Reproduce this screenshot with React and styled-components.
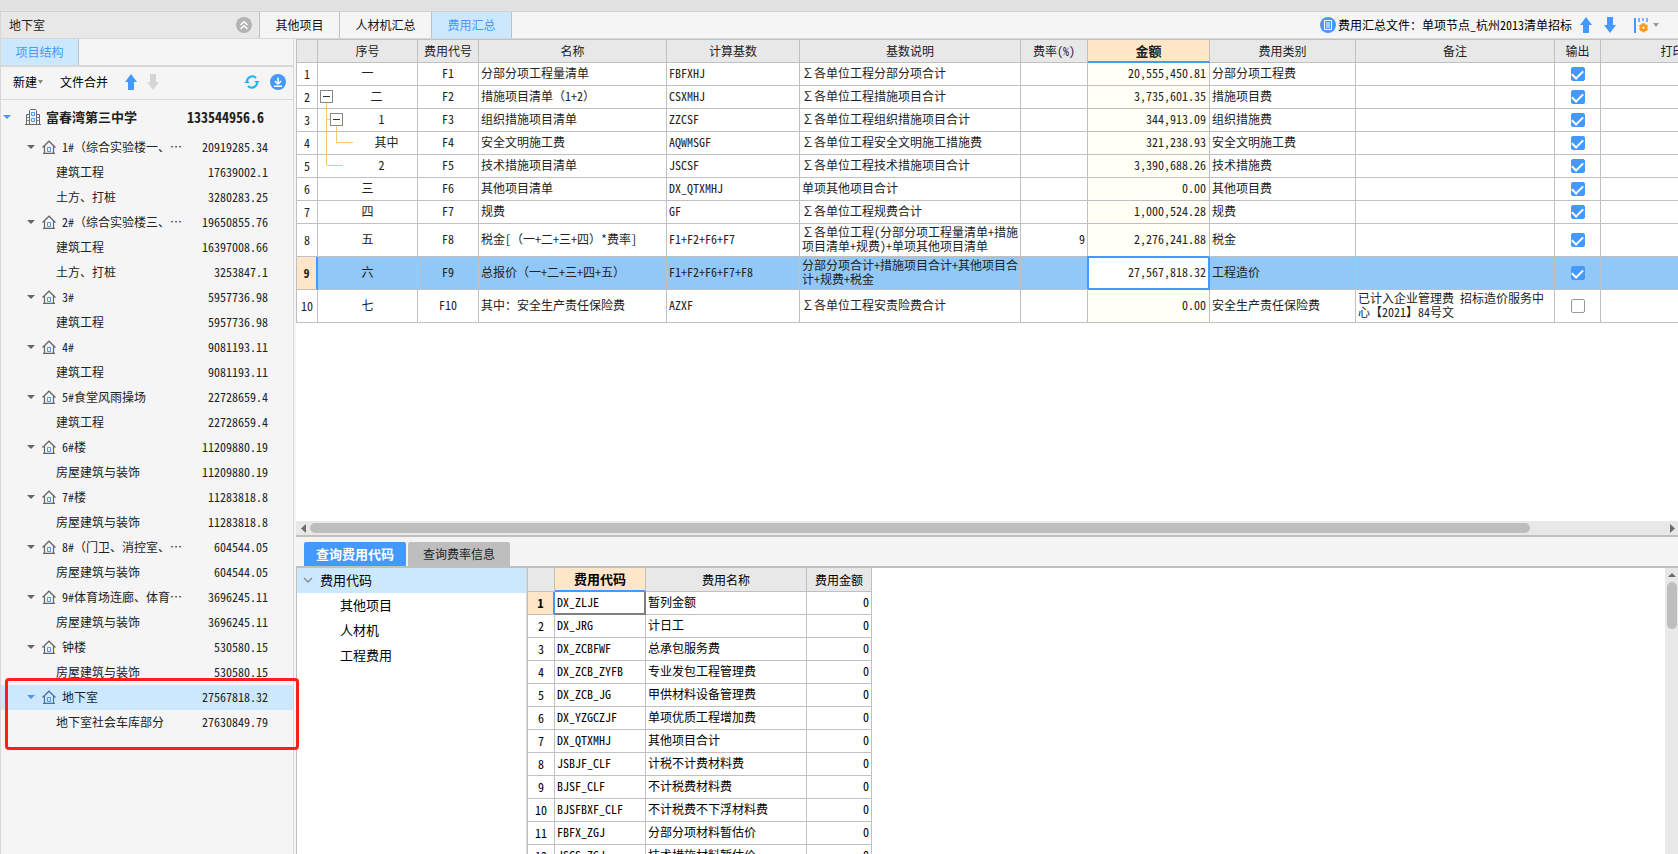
import React, { useState } from "react";
import styled, { createGlobalStyle, css } from "styled-components";

const BLUE = "#4499ff";
const LINE = "#c0c0c0";
const SOFT_LINE = "#d8d8d8";

const TABS = [
  { name: "其他项目", width: 80 },
  { name: "人材机汇总", width: 92 },
  { name: "费用汇总", width: 80 },
];

const PROJECT = { name: "富春湾第三中学", amount: "133544956.6" };

const BUILDINGS = [
  {
    name: "1#（综合实验楼一、…",
    amount: "20919285.34",
    units: [
      ["建筑工程", "17639002.1"],
      ["土方、打桩", "3280283.25"],
    ],
  },
  {
    name: "2#（综合实验楼三、…",
    amount: "19650855.76",
    units: [
      ["建筑工程", "16397008.66"],
      ["土方、打桩", "3253847.1"],
    ],
  },
  { name: "3#", amount: "5957736.98", units: [["建筑工程", "5957736.98"]] },
  { name: "4#", amount: "9081193.11", units: [["建筑工程", "9081193.11"]] },
  { name: "5#食堂风雨操场", amount: "22728659.4", units: [["建筑工程", "22728659.4"]] },
  { name: "6#楼", amount: "11209880.19", units: [["房屋建筑与装饰", "11209880.19"]] },
  { name: "7#楼", amount: "11283818.8", units: [["房屋建筑与装饰", "11283818.8"]] },
  { name: "8#（门卫、消控室、…", amount: "604544.05", units: [["房屋建筑与装饰", "604544.05"]] },
  { name: "9#体育场连廊、体育…", amount: "3696245.11", units: [["房屋建筑与装饰", "3696245.11"]] },
  { name: "钟楼", amount: "530580.15", units: [["房屋建筑与装饰", "530580.15"]] },
  {
    name: "地下室",
    amount: "27567818.32",
    units: [["地下室社会车库部分", "27630849.79"]],
    active: true,
  },
];

const FEE_COLUMNS = [
  { name: "", width: 22 },
  { name: "序号", width: 100 },
  { name: "费用代号", width: 61 },
  { name: "名称", width: 188 },
  { name: "计算基数", width: 133 },
  { name: "基数说明", width: 221 },
  { name: "费率(%)", width: 67 },
  { name: "金额", width: 122, current: true },
  { name: "费用类别", width: 146 },
  { name: "备注", width: 199 },
  { name: "输出", width: 46 },
  { name: "打印", width: 144 },
];

const FEES = [
  { no: "一", code: "F1", name: "分部分项工程量清单", base: "FBFXHJ", desc: "∑各单位工程分部分项合计", amount: "20,555,450.81", type: "分部分项工程费", out: true },
  { no: "二", code: "F2", name: "措施项目清单（1+2）", base: "CSXMHJ", desc: "∑各单位工程措施项目合计", amount: "3,735,601.35", type: "措施项目费", out: true, indent: 18, branch: "M8.5 17V23", box: 2 },
  { no: "1", code: "F3", name: "组织措施项目清单", base: "ZZCSF", desc: "∑各单位工程组织措施项目合计", amount: "344,913.09", type: "组织措施费", out: true, indent: 28, branch: "M8.5 0V23M8.5 10.5H12M18.5 17V23", box: 12 },
  { no: "其中", code: "F4", name: "安全文明施工费", base: "AQWMSGF", desc: "∑各单位工程安全文明施工措施费", amount: "321,238.93", type: "安全文明施工费", out: true, indent: 38, branch: "M8.5 0V23M18.5 0V10.5H35" },
  { no: "2", code: "F5", name: "技术措施项目清单", base: "JSCSF", desc: "∑各单位工程技术措施项目合计", amount: "3,390,688.26", type: "技术措施费", out: true, indent: 28, branch: "M8.5 0V10.5H25" },
  { no: "三", code: "F6", name: "其他项目清单", base: "DX_QTXMHJ", desc: "单项其他项目合计", amount: "0.00", type: "其他项目费", out: true },
  { no: "四", code: "F7", name: "规费", base: "GF", desc: "∑各单位工程规费合计", amount: "1,000,524.28", type: "规费", out: true },
  { no: "五", code: "F8", name: "税金[（一+二+三+四）*费率]", base: "F1+F2+F6+F7", desc: "∑各单位工程(分部分项工程量清单+措施项目清单+规费)+单项其他项目清单", rate: "9", amount: "2,276,241.88", type: "税金", out: true, tall: true },
  { no: "六", code: "F9", name: "总报价（一+二+三+四+五）", base: "F1+F2+F6+F7+F8", desc: "分部分项合计+措施项目合计+其他项目合计+规费+税金", amount: "27,567,818.32", type: "工程造价", out: true, tall: true, current: true },
  { no: "七", code: "F10", name: "其中：安全生产责任保险费", base: "AZXF", desc: "∑各单位工程安责险费合计", amount: "0.00", type: "安全生产责任保险费", note: "已计入企业管理费 招标造价服务中心【2021】84号文", out: false, tall: true },
];

const CODE_COLUMNS = [
  { name: "", width: 28 },
  { name: "费用代码", width: 91, current: true },
  { name: "费用名称", width: 161 },
  { name: "费用金额", width: 65 },
];

const CODES = [
  ["DX_ZLJE", "暂列金额"],
  ["DX_JRG", "计日工"],
  ["DX_ZCBFWF", "总承包服务费"],
  ["DX_ZCB_ZYFB", "专业发包工程管理费"],
  ["DX_ZCB_JG", "甲供材料设备管理费"],
  ["DX_YZGCZJF", "单项优质工程增加费"],
  ["DX_QTXMHJ", "其他项目合计"],
  ["JSBJF_CLF", "计税不计费材料费"],
  ["BJSF_CLF", "不计税费材料费"],
  ["BJSFBXF_CLF", "不计税费不下浮材料费"],
  ["FBFX_ZGJ", "分部分项材料暂估价"],
  ["JSCS_ZGJ", "技术措施材料暂估价"],
];

const sumWidth = (columns) => columns.reduce((sum, c) => sum + c.width, 0);

// 全角括号保持一个汉字宽
const renderName = (text) =>
  text
    .split(/([（）])/)
    .map((part, i) => (/[（）]/.test(part) ? <Wide key={i}>{part}</Wide> : part));

// 图标
const ArrowIcon = ({ down, color = BLUE }) => (
  <svg width="12" height="16" viewBox="0 0 12 16" aria-hidden="true">
    <path
      fill={color}
      d={down ? "M3 0h6v8h3L6 16 0 8h3z" : "M3 16h6V8h3L6 0 0 8h3z"}
    />
  </svg>
);

const Caret = ({ color = "#666", width = 8 }) => (
  <svg width={width} height="4" viewBox="0 0 8 4" preserveAspectRatio="none" aria-hidden="true">
    <path fill={color} d="M0 0h8L4 4z" />
  </svg>
);

const HouseIcon = ({ color }) => (
  <svg width="14" height="14" viewBox="0 0 14 14" fill="none" aria-hidden="true">
    <path d="M0.5 7.5L7 1.2l6.5 6.3M2.5 6v7M11.5 6v7M1 13.3h12" stroke={color} strokeWidth="1.2" />
    <path d="M5.5 7.5h3v4h-3z" stroke={BLUE} />
  </svg>
);

const SchoolIcon = () => (
  <svg width="16" height="16" viewBox="0 0 16 16" fill="none" aria-hidden="true">
    <path d="M0 15.5h16M4.5 15V1.5l1-1h5l1 1V15M1.5 15V5.5h3M14.5 15V5.5h-3" stroke="#666" />
    <path d="M2 8.5h2M2 11.5h2M12 8.5h2M12 11.5h2" stroke="#888" />
    <path d="M6.5 3.5h3v3h-3zM6.5 9.5h3v3h-3z" stroke={BLUE} />
  </svg>
);

const CollapseIcon = () => (
  <svg width="16" height="16" viewBox="0 0 16 16" fill="none" aria-hidden="true">
    <circle cx="8" cy="8" r="8" fill="#b3b3b3" />
    <path d="M4.5 8L8 4.7 11.5 8M4.5 12L8 8.7l3.5 3.3" stroke="#fff" strokeWidth="1.5" />
  </svg>
);

const RefreshIcon = () => (
  <svg width="16" height="14" viewBox="0 0 16 14" fill="none" aria-hidden="true">
    <path d="M3 6.5A5.2 5.2 0 0 1 12 3M13 7.5A5.2 5.2 0 0 1 4 11" stroke="#1ab2f5" strokeWidth="2" />
    <path d="M10.2 6h5.6L13 9zM0.2 8h5.6L3 5z" fill="#1ab2f5" />
  </svg>
);

const DownloadIcon = () => (
  <svg width="16" height="16" viewBox="0 0 16 16" fill="none" aria-hidden="true">
    <circle cx="8" cy="8" r="8" fill={BLUE} />
    <path d="M8 3.5v6M4.8 7L8 10l3.2-3M4 12.2h8" stroke="#fff" strokeWidth="1.5" />
  </svg>
);

const FileIcon = () => (
  <svg width="16" height="16" viewBox="0 0 16 16" fill="none" aria-hidden="true">
    <circle cx="8" cy="8" r="8" fill={BLUE} />
    <path d="M4.5 3.5h7v9h-7zM6 6h4M6 8h4M6 10h4" stroke="#fff" />
  </svg>
);

const ColumnSettingIcon = () => (
  <svg width="14" height="15" viewBox="0 0 14 15" fill="none" aria-hidden="true">
    <path d="M1 0v15" stroke={BLUE} strokeWidth="2" />
    <path d="M5 0v4M9 0v3M13 0v4" stroke={BLUE} strokeWidth="1.4" />
    <path
      d="M9.5 5.2v9M5.6 7.4l7.8 4.6M5.6 12l7.8-4.6"
      stroke="#ff9a1f"
      strokeWidth="2.8"
    />
    <circle cx="9.5" cy="9.7" r="2.4" stroke="#ff9a1f" strokeWidth="2.6" fill="#fff" />
  </svg>
);

const FeeCell = ({ fee }) => (
  <NumberCell $indent={fee.indent}>
    {fee.branch && (
      <Branch width="40" height="23" viewBox="0 0 40 23" aria-hidden="true">
        <path d={fee.branch} />
      </Branch>
    )}
    {fee.box && (
      <FoldButton $left={fee.box} aria-label={`折叠 ${fee.name}`}>
        <svg width="7" height="1" aria-hidden="true">
          <path d="M0 0h7v1H0z" fill="#333" />
        </svg>
      </FoldButton>
    )}
    {fee.no}
  </NumberCell>
);

const App = () => {
  const [fees, setFees] = useState(FEES);

  const toggleOut = (code) => {
    setFees(fees.map((f) => (f.code === code ? { ...f, out: !f.out } : f)));
  };

  return (
    <>
      <GlobalStyle />
      <Page>
        <WindowEdge />
        <TopBar>
          <CurrentNode>
            地下室
            <IconButton aria-label="收起">
              <CollapseIcon />
            </IconButton>
          </CurrentNode>
          {TABS.map((tab) => (
            <Tab key={tab.name} $width={tab.width} $active={tab.name === "费用汇总"}>
              {tab.name}
            </Tab>
          ))}
          <FileBar>
            <FileName>
              <FileIcon />
              费用汇总文件：单项节点_杭州2013清单招标
            </FileName>
            <IconButton aria-label="上移">
              <ArrowIcon />
            </IconButton>
            <IconButton aria-label="下移">
              <ArrowIcon down />
            </IconButton>
            <IconButton aria-label="列设置">
              <ColumnSettingIcon />
              <Caret color="#999" width={6} />
            </IconButton>
          </FileBar>
        </TopBar>

        <Body>
          <Sidebar>
            <SideTabs>
              <SideTab>项目结构</SideTab>
            </SideTabs>
            <Toolbar>
              <TextButton>
                新建
                <Caret color="#888" width={5} />
              </TextButton>
              <TextButton>文件合并</TextButton>
              <ArrowGroup>
                <IconButton aria-label="上移节点">
                  <ArrowIcon />
                </IconButton>
                <IconButton aria-label="下移节点" disabled>
                  <ArrowIcon down color="#d5d5d5" />
                </IconButton>
              </ArrowGroup>
              <SyncGroup>
                <IconButton aria-label="刷新">
                  <RefreshIcon />
                </IconButton>
                <IconButton aria-label="下载">
                  <DownloadIcon />
                </IconButton>
              </SyncGroup>
            </Toolbar>

            <RootRow>
              <Caret color={BLUE} />
              <RootLabel>
                <SchoolIcon />
                {PROJECT.name}
              </RootLabel>
              <RootAmount>{PROJECT.amount}</RootAmount>
            </RootRow>
            {BUILDINGS.map((b) => (
              <Building key={b.name}>
                <BuildingRow $active={b.active}>
                  <Caret color={b.active ? BLUE : "#666"} />
                  <BuildingLabel>
                    <HouseIcon color={b.active ? "#4d6f99" : "#666"} />
                    <span>{renderName(b.name)}</span>
                  </BuildingLabel>
                  <span>{b.amount}</span>
                </BuildingRow>
                {b.units.map(([name, amount]) => (
                  <UnitRow key={name}>
                    <span>{name}</span>
                    <span>{amount}</span>
                  </UnitRow>
                ))}
                {b.active && <Marker />}
              </Building>
            ))}
          </Sidebar>

          <Main>
            <FeePane>
              <Table $width={sumWidth(FEE_COLUMNS)}>
                <colgroup>
                  {FEE_COLUMNS.map((c, i) => (
                    <Col key={i} $width={c.width} />
                  ))}
                </colgroup>
                <thead>
                  <tr>
                    {FEE_COLUMNS.map((c, i) => (
                      <HeadCell key={i} $current={c.current} $top>
                        {c.name}
                      </HeadCell>
                    ))}
                  </tr>
                </thead>
                <tbody>
                  {fees.map((fee, i) => (
                    <FeeRow key={fee.code} $tall={fee.tall} $current={fee.current}>
                      <IndexCell $current={fee.current}>{i + 1}</IndexCell>
                      <FeeCell fee={fee} />
                      <Cell $align="center">{fee.code}</Cell>
                      <Cell>{renderName(fee.name)}</Cell>
                      <Cell>{fee.base}</Cell>
                      <Cell>{fee.desc}</Cell>
                      <Cell $align="right">{fee.rate}</Cell>
                      <AmountCell $current={fee.current}>{fee.amount}</AmountCell>
                      <Cell>{fee.type}</Cell>
                      <Cell>{fee.note}</Cell>
                      <CheckCell>
                        <Checkbox
                          type="checkbox"
                          aria-label={`输出 ${fee.name}`}
                          checked={fee.out}
                          onChange={() => toggleOut(fee.code)}
                        />
                      </CheckCell>
                      <Cell />
                    </FeeRow>
                  ))}
                </tbody>
              </Table>
            </FeePane>
            <HScroll>
              <svg width="5" height="9" viewBox="0 0 5 9" aria-hidden="true">
                <path d="M5 0v9L0 4.5z" fill="#6b6b73" />
              </svg>
              <HTrack>
                <HThumb />
              </HTrack>
              <svg width="5" height="9" viewBox="0 0 5 9" aria-hidden="true">
                <path d="M0 0v9l5-4.5z" fill="#6b6b73" />
              </svg>
            </HScroll>

            <QueryTabs>
              <QueryTab $active>查询费用代码</QueryTab>
              <QueryTab>查询费率信息</QueryTab>
            </QueryTabs>
            <QueryPane>
              <CodeTree>
                <CodeTreeRoot>
                  <svg width="10" height="6" viewBox="0 0 10 6" fill="none" aria-hidden="true">
                    <path d="M1 1l4 4 4-4" stroke="#888" strokeWidth="1.4" />
                  </svg>
                  费用代码
                </CodeTreeRoot>
                <CodeTreeItem>其他项目</CodeTreeItem>
                <CodeTreeItem>人材机</CodeTreeItem>
                <CodeTreeItem>工程费用</CodeTreeItem>
              </CodeTree>
              <CodeTableBox>
                <Table $width={sumWidth(CODE_COLUMNS)}>
                  <colgroup>
                    {CODE_COLUMNS.map((c, i) => (
                      <Col key={i} $width={c.width} />
                    ))}
                  </colgroup>
                  <thead>
                    <tr>
                      {CODE_COLUMNS.map((c, i) => (
                        <HeadCell key={i} $current={c.current}>
                          {c.name}
                        </HeadCell>
                      ))}
                    </tr>
                  </thead>
                  <tbody>
                    {CODES.map(([code, name], i) => (
                      <FeeRow key={code}>
                        <IndexCell $current={i === 0}>{i + 1}</IndexCell>
                        <CodeCell $current={i === 0}>{code}</CodeCell>
                        <Cell>{name}</Cell>
                        <Cell $align="right">0</Cell>
                      </FeeRow>
                    ))}
                  </tbody>
                </Table>
              </CodeTableBox>
              <VScroll>
                <svg width="8" height="4" viewBox="0 0 8 4" aria-hidden="true">
                  <path d="M4 0l4 4H0z" fill="#6b6b73" />
                </svg>
                <VThumb />
              </VScroll>
            </QueryPane>
          </Main>
        </Body>
      </Page>
    </>
  );
};

export default App;

const GlobalStyle = createGlobalStyle`
  * {
    box-sizing: border-box;
  }
  body {
    margin: 0;
    overflow: hidden;
    background: #f5f5f5;
  }
  body, button, input {
    font-family: "Noto Sans CJK SC", sans-serif;
    font-size: 12px;
    line-height: 14px;
    color: #222;
    /* 西文和数字占半个汉字宽 */
    font-feature-settings: "hwid";
    text-spacing-trim: space-all;
  }
  button {
    border: 0;
    padding: 0;
    background: none;
    white-space: nowrap;
  }
  svg {
    display: block;
    flex: none;
  }
`;

const Wide = styled.span`
  font-feature-settings: normal;
`;

const Page = styled.div`
  display: flex;
  flex-direction: column;
  height: 100vh;
`;

const WindowEdge = styled.div`
  flex: none;
  height: 12px;
  background: #e2e2e2;
  border-bottom: 1px solid #cfcfcf;
`;

const TopBar = styled.header`
  display: flex;
  flex: none;
  height: 27px;
  border-bottom: 1px solid ${SOFT_LINE};
`;

const CurrentNode = styled.div`
  display: flex;
  align-items: center;
  justify-content: space-between;
  width: 260px;
  padding: 0 7px 0 8px;
  background: #e8e8e8;
  border-left: 1px solid ${SOFT_LINE};
  border-right: 1px solid ${LINE};
`;

const IconButton = styled.button`
  display: flex;
  align-items: center;
  gap: 5px;
`;

const Tab = styled.button`
  width: ${(p) => p.$width}px;
  border-right: 1px solid ${LINE};
  color: ${(p) => (p.$active ? BLUE : "#111")};
  background: ${(p) => (p.$active ? "#cce8ff" : "#f5f5f5")};
`;

const FileBar = styled.div`
  display: flex;
  align-items: center;
  gap: 12px;
  margin-left: auto;
  padding-right: 19px;

  button:last-child {
    margin-left: 6px;
  }
`;

const FileName = styled.div`
  display: flex;
  align-items: center;
  gap: 2px;
  margin-right: -4px;
  white-space: nowrap;
  color: #000;
`;

const Body = styled.div`
  display: flex;
  flex: 1;
  min-height: 0;
`;

const Sidebar = styled.aside`
  flex: none;
  width: 294px;
  margin-right: 2px;
  border-left: 1px solid ${SOFT_LINE};
  border-right: 1px solid ${SOFT_LINE};
`;

const SideTabs = styled.div`
  display: flex;
  height: 28px;
  border-bottom: 2px solid ${SOFT_LINE};
`;

const SideTab = styled.button`
  width: 78px;
  color: ${BLUE};
  background: #cce8ff;
  border-right: 1px solid ${LINE};
`;

const Toolbar = styled.div`
  display: flex;
  align-items: center;
  height: 33px;
  gap: 17px;
  padding: 0 7px 2px 12px;
  border-bottom: 1px solid ${SOFT_LINE};
`;

const TextButton = styled.button`
  display: flex;
  align-items: center;
  gap: 1px;
  color: #000;
`;

const ArrowGroup = styled.div`
  display: flex;
  gap: 10px;
`;

const SyncGroup = styled.div`
  display: flex;
  align-items: center;
  gap: 10px;
  margin-left: auto;
`;

const RootRow = styled.div`
  display: flex;
  align-items: center;
  height: 35px;
  padding: 0 29px 2px 2px;
  font-size: 13px;
  font-weight: bold;
`;

const RootLabel = styled.span`
  display: flex;
  flex: 1;
  align-items: center;
  gap: 5px;
  margin-left: 14px;
`;

const RootAmount = styled.span`
  font-size: 14px;
`;

const Building = styled.div`
  position: relative;
`;

const BuildingRow = styled.div`
  display: flex;
  align-items: center;
  height: 25px;
  padding: 0 25px 2px 26px;
  background: ${(p) => (p.$active ? "#cce8ff" : "transparent")};
`;

const BuildingLabel = styled.span`
  display: flex;
  flex: 1;
  align-items: center;
  gap: 6px;
  margin-left: 7px;
`;

const UnitRow = styled.div`
  display: flex;
  align-items: center;
  justify-content: space-between;
  height: 25px;
  padding: 0 25px 2px 55px;
`;

// 红框压在侧栏和主表的交界上
const Marker = styled.div`
  position: absolute;
  z-index: 2;
  top: -7px;
  right: -6px;
  bottom: -15px;
  left: 4px;
  border: 3px solid #ff2015;
  border-radius: 4px;
  pointer-events: none;
`;

const Main = styled.main`
  display: flex;
  flex: 1;
  flex-direction: column;
  min-width: 0;
`;

const FeePane = styled.section`
  flex: 1;
  min-height: 0;
  overflow: hidden;
  background: #fff;
`;

const Table = styled.table`
  width: ${(p) => p.$width}px;
  table-layout: fixed;
  border-collapse: separate;
  border-spacing: 0;
`;

const Col = styled.col`
  width: ${(p) => p.$width}px;
`;

const HeadCell = styled.th`
  height: 24px;
  padding: 0;
  font-weight: normal;
  background: #e8e8e8;
  border-top: ${(p) => (p.$top ? 1 : 0)}px solid ${LINE};
  border-right: 1px solid ${LINE};
  border-bottom: 1px solid ${LINE};

  &:first-child {
    border-left: 1px solid ${LINE};
  }

  ${(p) =>
    p.$current &&
    css`
      font-size: 13px;
      font-weight: bold;
      background: #ffe6c8;
      border-bottom: 2px solid ${BLUE};
    `}
`;

const FeeRow = styled.tr`
  height: ${(p) => (p.$tall ? 33 : 23)}px;
  background: ${(p) => (p.$current ? "#91c8f7" : "#fff")};
`;

const Cell = styled.td`
  padding: 0 2px 2px;
  text-align: ${(p) => p.$align || "left"};
  word-break: break-all;
  border-right: 1px solid ${LINE};
  border-bottom: 1px solid ${LINE};
`;

const CheckCell = styled(Cell)`
  padding: 0;
`;

const IndexCell = styled(Cell)`
  padding: 0;
  text-align: center;
  border-left: 1px solid ${LINE};

  ${(p) =>
    p.$current &&
    css`
      font-weight: bold;
      background: #ffe6c8;
      border-right: 2px solid ${BLUE};
    `}
`;

const NumberCell = styled(Cell)`
  position: relative;
  padding: 0 0 2px ${(p) => p.$indent || 0}px;
  text-align: center;
`;

const Branch = styled.svg`
  position: absolute;
  top: 0;
  left: 0;
  fill: none;
  stroke: #ffc775;
`;

const FoldButton = styled.button`
  position: absolute;
  top: 4px;
  left: ${(p) => p.$left}px;
  display: flex;
  align-items: center;
  justify-content: center;
  width: 13px;
  height: 13px;
  background: #fff;
  border: 1px solid #888;
`;

const AmountCell = styled(Cell)`
  padding-right: 3px;
  text-align: right;
  background: #fffff5;

  ${(p) =>
    p.$current &&
    css`
      background: #fff;
      box-shadow: inset 0 0 0 1px ${BLUE}, -1px -1px 0 ${BLUE};
      border-color: ${BLUE};
    `}
`;

const CodeCell = styled(Cell)`
  ${(p) =>
    p.$current &&
    css`
      border-right: 2px solid #808080;
      border-bottom: 2px solid #808080;
    `}
`;

const Checkbox = styled.input`
  display: block;
  width: 14px;
  height: 14px;
  margin: 0 auto;
  appearance: none;
  background: #fff;
  border: 1px solid #999;
  border-radius: 2px;

  &:checked {
    background: ${BLUE};
    border-color: ${BLUE};
  }

  &:checked::after {
    content: "";
    display: block;
    width: 5px;
    height: 9px;
    margin: 0 auto;
    border: solid #fff;
    border-width: 0 2px 2px 0;
    transform: rotate(45deg);
  }
`;

const HScroll = styled.div`
  display: flex;
  flex: none;
  align-items: center;
  gap: 9px;
  height: 16px;
  padding: 0 3px 0 5px;
  background: #e8e8e8;
  border-bottom: 2px solid ${LINE};
`;

const HTrack = styled.div`
  flex: 1;
`;

const HThumb = styled.div`
  width: calc(91% - 5px);
  height: 10px;
  margin-left: -5px;
  background: #bebebe;
  border-radius: 5px;
`;

const QueryTabs = styled.div`
  display: flex;
  flex: none;
  align-items: flex-end;
  gap: 2px;
  height: 31px;
  padding-left: 8px;
  background: #f4f4f4;
  border-bottom: 2px solid ${LINE};
`;

const QueryTab = styled.button`
  width: 102px;
  height: 24px;
  border-radius: 2px 2px 0 0;
  color: ${(p) => (p.$active ? "#fff" : "#222")};
  font-size: ${(p) => (p.$active ? 13 : 12)}px;
  font-weight: ${(p) => (p.$active ? "bold" : "normal")};
  background: ${(p) => (p.$active ? BLUE : "#bebebe")};
`;

const QueryPane = styled.section`
  display: flex;
  flex: none;
  height: 286px;
  background: #fff;
`;

const CodeTree = styled.div`
  flex: none;
  width: 230px;
  border-left: 1px solid ${LINE};
  font-size: 13px;
  color: #000;
`;

const CodeTreeRoot = styled.div`
  display: flex;
  align-items: center;
  gap: 7px;
  height: 25px;
  padding: 0 0 2px 6px;
  background: #cce8ff;
`;

const CodeTreeItem = styled.div`
  display: flex;
  align-items: center;
  height: 25px;
  padding: 0 0 2px 43px;
`;

const CodeTableBox = styled.div`
  flex: 1;
  min-width: 0;
  overflow: hidden;
  border-left: 1px solid ${SOFT_LINE};
  color: #000;
`;

const VScroll = styled.div`
  display: flex;
  flex: none;
  flex-direction: column;
  align-items: center;
  gap: 5px;
  width: 13px;
  padding-top: 5px;
  background: #e8e8e8;
`;

const VThumb = styled.div`
  width: 10px;
  height: 47px;
  background: #bebebe;
  border-radius: 5px;
`;
